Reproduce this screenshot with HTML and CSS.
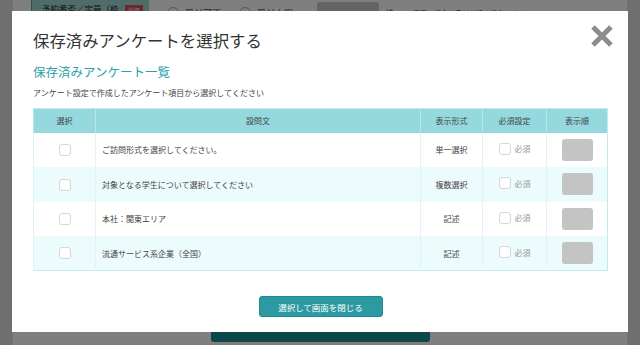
FILE: index.html
```html
<!DOCTYPE html>
<html lang="ja">

<head>
    <meta charset="UTF-8">
    <meta name="viewport" content="width=device-width, initial-scale=1.0">
    <title>保存済みアンケートを選択する</title>
    <link rel="stylesheet" href="styles.css">
</head>

<body>
    <!-- page under the modal -->
    <div class="page">
        <div class="page-row">
            <div class="page-label">予約番否／定員（枠 <span class="badge">必須</span></div>
            <span class="radio"></span><span class="page-txt">受付可否</span>
            <span class="radio"></span><span class="page-txt">受付上限</span>
            <span class="page-input"></span><span class="page-txt">枠</span>
            <span class="page-note">※満席の場合は受付が締め切られます</span>
        </div>
        <div class="page-foot">
            <div class="page-btn"></div>
        </div>
    </div>

    <div class="overlay">
        <div class="modal">
            <button class="close" aria-label="閉じる">
                <svg width="24" height="24" viewBox="0 0 24 24">
                    <path d="M3 3 L21 21 M21 3 L3 21" stroke="#8c8c8c" stroke-width="5" fill="none" />
                </svg>
            </button>
            <h1 class="modal-title">保存済みアンケートを選択する</h1>
            <h2 class="sub-title">保存済みアンケート一覧</h2>
            <p class="desc">アンケート設定で作成したアンケート項目から選択してください</p>

            <table class="q-table">
                <thead>
                    <tr>
                        <th class="c-sel">選択</th>
                        <th class="c-q">設問文</th>
                        <th class="c-type">表示形式</th>
                        <th class="c-req">必須設定</th>
                        <th class="c-ord">表示順</th>
                    </tr>
                </thead>
                <tbody>
                    <tr>
                        <td class="c-sel"><span class="check"></span></td>
                        <td class="c-q">ご訪問形式を選択してください。</td>
                        <td class="c-type">単一選択</td>
                        <td class="c-req"><span class="req"><span class="check"></span>必須</span></td>
                        <td class="c-ord"><span class="order"></span></td>
                    </tr>
                    <tr>
                        <td class="c-sel"><span class="check"></span></td>
                        <td class="c-q">対象となる学生について選択してください</td>
                        <td class="c-type">複数選択</td>
                        <td class="c-req"><span class="req"><span class="check"></span>必須</span></td>
                        <td class="c-ord"><span class="order"></span></td>
                    </tr>
                    <tr>
                        <td class="c-sel"><span class="check"></span></td>
                        <td class="c-q">本社：関東エリア</td>
                        <td class="c-type">記述</td>
                        <td class="c-req"><span class="req"><span class="check"></span>必須</span></td>
                        <td class="c-ord"><span class="order"></span></td>
                    </tr>
                    <tr>
                        <td class="c-sel"><span class="check"></span></td>
                        <td class="c-q">流通サービス系企業（全国）</td>
                        <td class="c-type">記述</td>
                        <td class="c-req"><span class="req"><span class="check"></span>必須</span></td>
                        <td class="c-ord"><span class="order"></span></td>
                    </tr>
                </tbody>
            </table>

            <div class="actions">
                <button class="submit">選択して画面を閉じる</button>
            </div>
        </div>
    </div>
</body>

</html>
```

FILE: styles.css
```css
* {
    box-sizing: border-box;
}

body {
    margin: 0;
    height: 345px;
    overflow: hidden;
    background: #dedede;
    font-family: "Noto Sans CJK JP", "Noto Sans", sans-serif;
    color: #333;
}

/* page behind */
.page {
    margin: 0 13px;
    height: 345px;
    background: #fff;
    display: flex;
    flex-direction: column;
    justify-content: space-between;
}

.page-row {
    display: flex;
    align-items: center;
    height: 22px;
    margin-top: -2px;
    padding-left: 18px;
    font-size: 9px;
    white-space: nowrap;
}

.page-label {
    width: 118px;
    height: 22px;
    background: #9fd8d2;
    border-left: 1px solid #49a7a5;
    padding: 4px 0 0 10px;
    color: #222;
    display: flex;
    gap: 6px;
    font-size: 8.5px;
}

.badge {
    background: #e0505f;
    color: #fff;
    font-size: 6px;
    padding: 1px 3px;
    height: 10px;
    margin-top: 3px;
}

.radio {
    width: 12px;
    height: 12px;
    border: 1px solid #aaa;
    border-radius: 50%;
    margin: 8px 6px 0 18px;
}

.page-txt {
    margin-top: 8px;
    color: #444;
}

.page-input {
    width: 62px;
    height: 18px;
    background: #c9c9c9;
    border-radius: 2px;
    margin: 4px 6px 0 24px;
}

.page-note {
    font-size: 7px;
    margin: 8px 0 0 12px;
    color: #555;
}

.page-foot {
    display: flex;
    justify-content: center;
}

.page-btn {
    width: 219px;
    height: 21px;
    margin-bottom: 3px;
    background: #1b8e94;
    border-radius: 3px;
}

/* modal */
.overlay {
    position: fixed;
    inset: 0;
    background: rgba(0, 0, 0, 0.5);
    display: flex;
    padding: 11px 13px 13px 12px;
}

.modal {
    position: relative;
    flex: 1;
    background: #fff;
    padding: 19px 20px 0 21px;
}

.close {
    position: absolute;
    top: 13px;
    right: 14px;
    width: 24px;
    height: 24px;
    padding: 0;
    border: none;
    background: none;
    cursor: pointer;
}

.modal-title {
    margin: 0;
    font-size: 16.4px;
    line-height: 20px;
    font-weight: 400;
    color: #333;
}

.sub-title {
    margin: 14px 0 0;
    font-size: 12.5px;
    line-height: 16px;
    font-weight: 400;
    color: #2d9ea6;
}

.desc {
    margin: 7px 0 0;
    font-size: 8px;
    line-height: 12px;
    color: #444;
}

.q-table {
    margin-top: 9px;
    width: 574px;
    border-collapse: collapse;
    table-layout: fixed;
    border: 1px solid #c3eaee;
    font-size: 8px;
}

.q-table th {
    height: 24px;
    background: #95d8de;
    font-weight: 400;
    color: #444;
    border-left: 1px solid #b9e6ea;
}

.q-table td {
    height: 34.5px;
    border-left: 1px solid #def4f6;
    color: #444;
    text-align: center;
    vertical-align: middle;
}

.q-table tbody tr:nth-child(even) td {
    background: #ecfbfc;
}

.q-table .c-sel {
    width: 62px;
}

.q-table .c-q {
    width: 325px;
}

.q-table td.c-q {
    text-align: left;
    padding-left: 6px;
}

.q-table .c-type {
    width: 62px;
}

.q-table .c-req {
    width: 64px;
}

.q-table .c-ord {
    width: 61px;
}

.check {
    display: inline-block;
    width: 12px;
    height: 12px;
    border: 1px solid #d6d6d6;
    border-radius: 3px;
    background: #fff;
    vertical-align: middle;
}

.req {
    display: inline-flex;
    align-items: center;
    gap: 4px;
    color: #999;
}

.order {
    display: inline-block;
    width: 31px;
    height: 22px;
    background: #c4c4c4;
    border-radius: 3px;
    vertical-align: middle;
}

.actions {
    display: flex;
    justify-content: center;
    margin-top: 25px;
}

.submit {
    width: 124px;
    height: 21px;
    padding: 0;
    background: #2b9ba1;
    border: 1px solid #24898e;
    border-radius: 3px;
    color: #fff;
    font-family: inherit;
    font-size: 8.5px;
    cursor: pointer;
}
```
